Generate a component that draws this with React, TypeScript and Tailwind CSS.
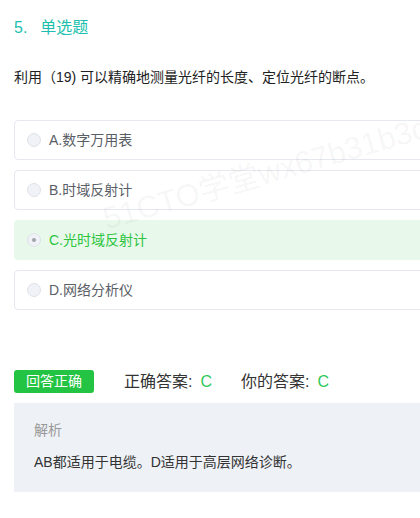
import React from "react";

const font = { fontFamily: '"Liberation Sans", "Noto Sans CJK SC", sans-serif' };

function Option({ label, selected }: { label: string; selected?: boolean }) {
  return (
    <div
      className={
        "flex items-center h-[40px] rounded-[4px] pl-[12px] " +
        (selected ? "bg-[#e8f8eb] border border-[#e8f8eb]" : "bg-white border border-[#e6e8f0]")
      }
    >
      <span className="w-[14px] h-[14px] rounded-full bg-[#f0f2f7] border border-[#dfe2ea] flex items-center justify-center">
        {selected && <span className="w-[4px] h-[4px] rounded-full bg-[#a0a4ad]" />}
      </span>
      <span className={"ml-[8px] text-[14px] " + (selected ? "text-[#2cc53f]" : "text-[#5a5e66]")}>{label}</span>
    </div>
  );
}

export default function App() {
  return (
    <div className="relative w-[420px] h-[518px] overflow-hidden bg-white" style={font}>
      <div className="w-[720px] pl-[14px]">
        <div className="pt-[19px] text-[16px] leading-[18px] text-[#1cbfae]">
          5.<span className="ml-[13px]">单选题</span>
        </div>
        <div className="mt-[31px] text-[14px] leading-[18px] text-[#222]">利用（19) 可以精确地测量光纤的长度、定位光纤的断点。</div>
        <div className="mt-[34px] flex flex-col gap-[10px]">
          <Option label="A.数字万用表" />
          <Option label="B.时域反射计" />
          <Option label="C.光时域反射计" selected />
          <Option label="D.网络分析仪" />
        </div>
        <div className="mt-[60px] flex items-center h-[23px]">
          <span className="h-[23px] w-[80px] rounded-[3px] bg-[#23c443] text-white text-[14px] flex items-center justify-center">回答正确</span>
          <span className="ml-[30px] text-[16px] text-[#333]">正确答案:</span>
          <span className="ml-[8px] text-[16px] text-[#2cc95a]">C</span>
          <span className="ml-[29px] text-[16px] text-[#333]">你的答案:</span>
          <span className="ml-[8px] text-[16px] text-[#2cc95a]">C</span>
        </div>
        <div className="mt-[10px] h-[89px] bg-[#eef1f6] pl-[20px] pt-[18px]">
          <div className="text-[14px] leading-[18px] text-[#999]">解析</div>
          <div className="mt-[14px] text-[14px] leading-[18px] text-[#333]">AB都适用于电缆。D适用于高层网络诊断。</div>
        </div>
      </div>
      <div
        className="absolute left-[104px] top-[202px] text-[31px] leading-[36px] text-[rgba(0,0,0,0.05)] whitespace-nowrap pointer-events-none origin-left -rotate-[16deg]"
        style={font}
      >
        51CTO学堂wx67b31b3c
      </div>
    </div>
  );
}
